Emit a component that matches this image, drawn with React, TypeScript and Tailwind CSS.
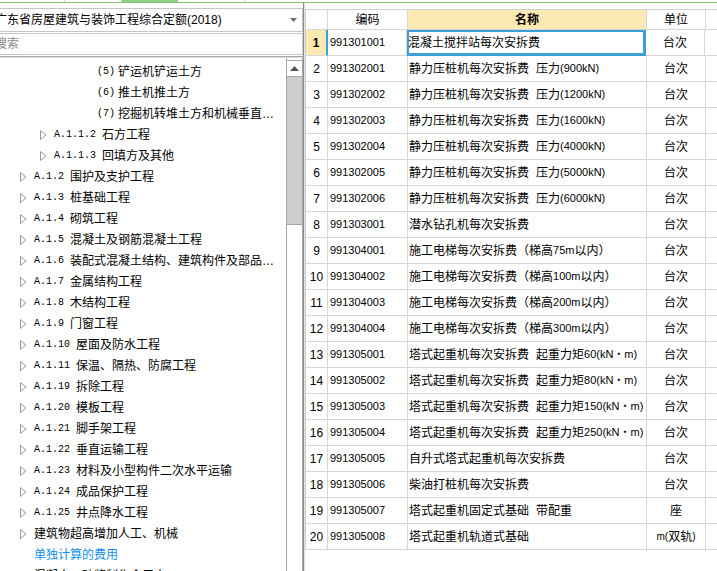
import React from 'react';

const SANS = "font-['Liberation_Sans','Noto_Sans_CJK_SC',sans-serif]";
const MONO = "font-['Liberation_Mono','Noto_Sans_CJK_SC',monospace]";

type TreeItem = { lvl: 1 | 2 | 3; code?: string; text: string; leaf?: boolean; blue?: boolean };

const tree: TreeItem[] = [
  { lvl: 3, code: '(5)', text: '铲运机铲运土方' },
  { lvl: 3, code: '(6)', text: '推土机推土方' },
  { lvl: 3, code: '(7)', text: '挖掘机转堆土方和机械垂直…' },
  { lvl: 2, code: 'A.1.1.2', text: '石方工程' },
  { lvl: 2, code: 'A.1.1.3', text: '回填方及其他' },
  { lvl: 1, code: 'A.1.2', text: '围护及支护工程' },
  { lvl: 1, code: 'A.1.3', text: '桩基础工程' },
  { lvl: 1, code: 'A.1.4', text: '砌筑工程' },
  { lvl: 1, code: 'A.1.5', text: '混凝土及钢筋混凝土工程' },
  { lvl: 1, code: 'A.1.6', text: '装配式混凝土结构、建筑构件及部品…' },
  { lvl: 1, code: 'A.1.7', text: '金属结构工程' },
  { lvl: 1, code: 'A.1.8', text: '木结构工程' },
  { lvl: 1, code: 'A.1.9', text: '门窗工程' },
  { lvl: 1, code: 'A.1.10', text: '屋面及防水工程' },
  { lvl: 1, code: 'A.1.11', text: '保温、隔热、防腐工程' },
  { lvl: 1, code: 'A.1.19', text: '拆除工程' },
  { lvl: 1, code: 'A.1.20', text: '模板工程' },
  { lvl: 1, code: 'A.1.21', text: '脚手架工程' },
  { lvl: 1, code: 'A.1.22', text: '垂直运输工程' },
  { lvl: 1, code: 'A.1.23', text: '材料及小型构件二次水平运输' },
  { lvl: 1, code: 'A.1.24', text: '成品保护工程' },
  { lvl: 1, code: 'A.1.25', text: '井点降水工程' },
  { lvl: 1, text: '建筑物超高增加人工、机械' },
  { lvl: 1, text: '单独计算的费用', leaf: true, blue: true },
  { lvl: 1, text: '混凝土、砂浆制作含用去' },
];

function Lat({ children }: { children: React.ReactNode }) {
  return <span className="text-[11px]">{children}</span>;
}

const rows: [string, React.ReactNode, React.ReactNode][] = [
  ['991301001', '混凝土搅拌站每次安拆费', '台次'],
  ['991302001', <>静力压桩机每次安拆费<span className="ml-[7px]">压力</span><Lat>(900kN)</Lat></>, '台次'],
  ['991302002', <>静力压桩机每次安拆费<span className="ml-[7px]">压力</span><Lat>(1200kN)</Lat></>, '台次'],
  ['991302003', <>静力压桩机每次安拆费<span className="ml-[7px]">压力</span><Lat>(1600kN)</Lat></>, '台次'],
  ['991302004', <>静力压桩机每次安拆费<span className="ml-[7px]">压力</span><Lat>(4000kN)</Lat></>, '台次'],
  ['991302005', <>静力压桩机每次安拆费<span className="ml-[7px]">压力</span><Lat>(5000kN)</Lat></>, '台次'],
  ['991302006', <>静力压桩机每次安拆费<span className="ml-[7px]">压力</span><Lat>(6000kN)</Lat></>, '台次'],
  ['991303001', '潜水钻孔机每次安拆费', '台次'],
  ['991304001', <>施工电梯每次安拆费（梯高<Lat>75m</Lat>以内）</>, '台次'],
  ['991304002', <>施工电梯每次安拆费（梯高<Lat>100m</Lat>以内）</>, '台次'],
  ['991304003', <>施工电梯每次安拆费（梯高<Lat>200m</Lat>以内）</>, '台次'],
  ['991304004', <>施工电梯每次安拆费（梯高<Lat>300m</Lat>以内）</>, '台次'],
  ['991305001', <>塔式起重机每次安拆费<span className="ml-[7px]">起重力矩</span><Lat>60(kN・m)</Lat></>, '台次'],
  ['991305002', <>塔式起重机每次安拆费<span className="ml-[7px]">起重力矩</span><Lat>80(kN・m)</Lat></>, '台次'],
  ['991305003', <>塔式起重机每次安拆费<span className="ml-[7px]">起重力矩</span><Lat>150(kN・m)</Lat></>, '台次'],
  ['991305004', <>塔式起重机每次安拆费<span className="ml-[7px]">起重力矩</span><Lat>250(kN・m)</Lat></>, '台次'],
  ['991305005', '自升式塔式起重机每次安拆费', '台次'],
  ['991305006', '柴油打桩机每次安拆费', '台次'],
  ['991305007', <>塔式起重机固定式基础<span className="ml-[7px]">带配重</span></>, '座'],
  ['991305008', '塔式起重机轨道式基础', <><span className="text-[10px]">m(</span>双轨<span className="text-[10px]">)</span></>],
];

function Arrow() {
  return (
    <svg width="7" height="10" viewBox="0 0 7 10" className="shrink-0">
      <polygon points="0.5,0.5 6,5 0.5,9.5" fill="#fafafa" stroke="#9a9a9a" strokeWidth="1" />
    </svg>
  );
}

function TreeRow({ item }: { item: TreeItem }) {
  if (item.lvl === 3) {
    return (
      <div className="h-[21px] flex items-center pl-[97px] whitespace-nowrap">
        <span className={`${MONO} text-[10px] w-[21px]`}>{item.code}</span>
        <span>{item.text}</span>
      </div>
    );
  }
  const pad = item.lvl === 2 ? 'pl-[40px]' : 'pl-[20px]';
  return (
    <div className={`h-[21px] flex items-center ${pad} whitespace-nowrap`}>
      <span className="w-[14px] flex">{!item.leaf && <Arrow />}</span>
      {item.code && <span className={`${MONO} text-[10px] mr-[6px]`}>{item.code}</span>}
      <span className={item.blue ? 'text-[#0f8ff0]' : ''}>{item.text}</span>
    </div>
  );
}

function TopStrip() {
  return (
    <div className="h-[3px] flex border-b border-[#86c878] shrink-0">
      <div className="w-[65px] border-r border-[#cfcfcf]" />
      <div className="w-[57px] border-r border-[#cfcfcf]" />
      <div className="w-[56px] bg-[#8fd07d]" />
      <div className="w-[67px] border-r border-[#cfcfcf]" />
      <div className="flex-1" />
    </div>
  );
}

function LeftPanel() {
  return (
    <div className={`w-[303px] shrink-0 flex flex-col overflow-hidden text-[12px] text-black ${SANS}`}>
      <div className="h-[5px]" />
      <div className="h-[24px] ml-[-8px] border border-[#c6c6c6] flex items-center pl-[2px] pr-[5px]">
        <span className="flex-1 whitespace-nowrap">广东省房屋建筑与装饰工程综合定额(2018)</span>
        <svg width="7" height="4" viewBox="0 0 7 4"><polygon points="0,0 7,0 3.5,4" fill="#6d6d6d" /></svg>
      </div>
      <div className="h-[22px] mt-[1px] ml-[-8px] border border-[#c6c6c6] flex items-center pl-[2px] text-[#8a8a8a]">
        搜索
      </div>
      <div className="h-[2px] mt-[1px] border-t border-b border-t-[#a8a8a8] border-b-[#dcdcdc]" />
      <div className="flex-1 flex min-h-0">
        <div className="flex-1 pt-[3px] overflow-hidden">
          {tree.map((t, i) => (
            <TreeRow key={i} item={t} />
          ))}
        </div>
        <div className="w-[17px] border-l border-r border-[#a8a8a8] flex flex-col">
          <div className="h-[2px] bg-white" />
          <div className="h-[17px] border-t border-b border-[#a8a8a8] bg-white flex items-center justify-center">
            <svg width="9" height="5" viewBox="0 0 9 5"><polygon points="0,5 9,5 4.5,0" fill="#555" /></svg>
          </div>
          <div className="h-[148px] bg-[#cdcdcd] border-b border-[#a8a8a8]" />
          <div className="flex-1 bg-white" />
        </div>
      </div>
    </div>
  );
}

function RightPanel() {
  return (
    <div className={`flex-1 min-w-0 pt-[6px] ${SANS} text-[12px] text-black`}>
      <div className="border-l border-t border-[#cfcfcf]">
        <div className="flex h-[20px]">
          <div className="w-[22px] border-r border-b border-[#d6d6d6]" />
          <div className="w-[80px] border-r border-b border-[#d6d6d6] flex items-center justify-center">编码</div>
          <div className="w-[239px] border-r border-b border-[#d6d6d6] bg-[#fde9b2] flex items-center justify-center font-bold">名称</div>
          <div className="w-[59px] border-r border-b border-[#d6d6d6] flex items-center justify-center">单位</div>
          <div className="flex-1 border-b border-[#d6d6d6]" />
        </div>
        {rows.map(([code, name, unit], i) => {
          const sel = i === 0;
          return (
            <div key={code} className="flex h-[26px]">
              <div
                className={`w-[22px] border-b flex items-center justify-center ${
                  sel
                    ? 'bg-[#fde9b2] font-bold border-r-2 border-r-[#3ca0d5] border-b-[#d6d6d6]'
                    : 'border-r border-[#d6d6d6]'
                }`}
              >
                {i + 1}
              </div>
              <div className={`${sel ? 'w-[79px]' : 'w-[80px]'} border-r border-b border-[#d6d6d6] flex items-center pl-[2px] text-[11px]`}>
                {code}
              </div>
              <div
                className={`w-[239px] border-r border-b border-[#d6d6d6] flex items-center pl-[1px] whitespace-nowrap ${
                  sel ? 'shadow-[inset_0_0_0_2px_#3ca0d5] border-r-[#3ca0d5] border-b-[#3ca0d5]' : ''
                }`}
              >
                {name}
              </div>
              <div className="w-[59px] border-r border-b border-[#d6d6d6] flex items-center justify-center whitespace-nowrap">
                {unit}
              </div>
              <div className="flex-1 border-b border-[#d6d6d6]" />
            </div>
          );
        })}
      </div>
    </div>
  );
}

export default function App() {
  return (
    <div className="w-[717px] h-[571px] overflow-hidden bg-white flex flex-col">
      <TopStrip />
      <div className="flex-1 flex min-h-0">
        <LeftPanel />
        <div className="w-[2px] shrink-0 border-l border-[#8c8c8c] bg-[#e2e2e2]" />
        <RightPanel />
      </div>
    </div>
  );
}
